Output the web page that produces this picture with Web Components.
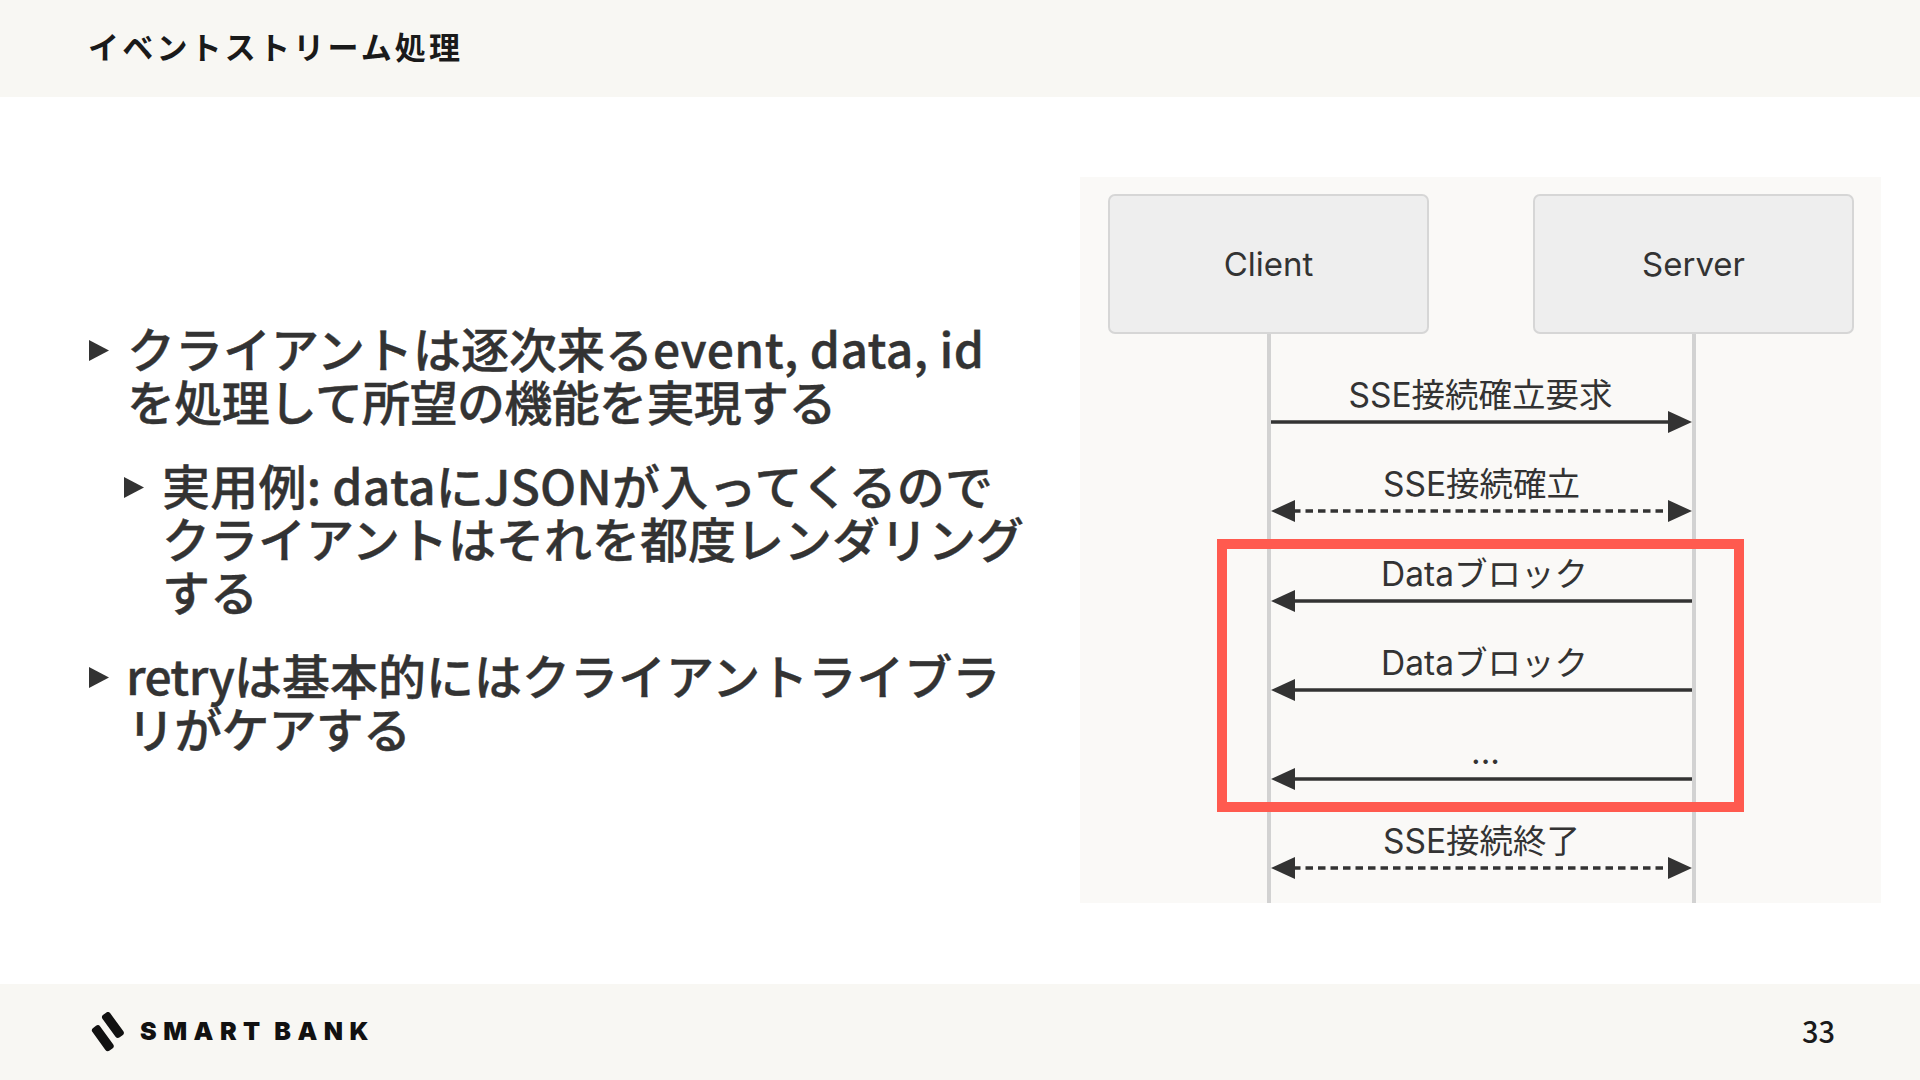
<!DOCTYPE html>
<html lang="ja"><head><meta charset="utf-8"><title>イベントストリーム処理</title>
<style>
html,body{margin:0;padding:0;background:#fff}
body{width:1920px;height:1080px;overflow:hidden;font-family:"Noto Sans CJK JP","Noto Sans",sans-serif}
</style></head><body>
<slide-page>
  <slide-header slot="header">イベントストリーム処理</slide-header>
  <bullet-list slot="left">
    <bullet-item>クライアントは逐次来る<span style="letter-spacing:.35px">event, data, id</span><br><span style="letter-spacing:-.65px">を処理して所望の機能を実現する</span></bullet-item>
    <bullet-item sub><span style="letter-spacing:.25px">実用例: dataにJSONが入ってくるので</span><br>クライアントはそれを都度レンダリング<br>する</bullet-item>
    <bullet-item><span style="letter-spacing:-.7px;margin-left:-1px">retry</span>は基本的にはクライアントライブラ<br><span style="letter-spacing:-.8px">リがケアする</span></bullet-item>
  </bullet-list>
  <seq-diagram slot="right">
    <seq-message dir="right" shift="-1">SSE接続確立要求</seq-message>
    <seq-message dir="both" dashed>SSE接続確立</seq-message>
    <seq-message dir="left" shift="3">Dataブロック</seq-message>
    <seq-message dir="left" shift="3">Dataブロック</seq-message>
    <seq-message dir="left" shift="4">...</seq-message>
    <seq-message dir="both" dashed>SSE接続終了</seq-message>
  </seq-diagram>
  <slide-footer slot="footer" page="33"></slide-footer>
</slide-page>
<script>
function def(name, css, html, init){
  customElements.define(name, class extends HTMLElement{
    constructor(){super();this.attachShadow({mode:'open'}).innerHTML='<style>'+css+'</style>'+html;}
    connectedCallback(){ if(init) init(this); }
  });
}
def('slide-page',`
  :host{display:grid;grid-template-rows:97px 1fr 96px;width:1920px;height:1080px}
  main{display:grid;grid-template-columns:1fr 801px;align-items:center;padding:0 39px 0 89px;min-height:0}
`,`<slot name="header"></slot><main><slot name="left"></slot><slot name="right"></slot></main><slot name="footer"></slot>`);
def('slide-header',`
  :host{display:flex;align-items:center;background:#f8f7f3;padding:0 0 6px 88px;box-sizing:border-box;
  font-size:31px;font-weight:700;letter-spacing:3.2px;color:#1a1a1a}
`,`<slot></slot>`);
def('bullet-list',`
  :host{display:flex;flex-direction:column;gap:31px;font-size:48px;line-height:53px;font-weight:500;color:#333;-webkit-text-stroke:.4px #333}
`,`<slot></slot>`);
def('bullet-item',`
  :host{display:flex;gap:18px;white-space:nowrap}
  :host([sub]){margin-left:35px}
  svg{flex:none;width:20px;height:21px;margin-top:16px}
  div{flex:1;margin:-3px 0 3px}
`,`<svg viewBox="0 0 20 21"><path d="M0 0L20 10.5L0 21Z" fill="#333"/></svg><div><slot></slot></div>`);
def('seq-diagram',`
  :host{display:block;position:relative;width:801px;height:726px;margin-bottom:1px;box-sizing:border-box;background:#faf9f7;padding:17px 27px 0 28px;
  font-family:Inter,"Noto Sans CJK JP",sans-serif;font-size:33px;color:#333;font-weight:400}
  .boxes{display:flex;justify-content:space-between}
  .box{width:321px;height:140px;box-sizing:border-box;border:2px solid #d6d6d6;border-radius:7px;background:#eee;display:flex;align-items:center;justify-content:center;font-size:33px}
  .life{position:absolute;top:157px;bottom:0;width:4px;background:#d2d2d2}
  .msgs{position:relative;padding:10px 0 0 163px;font-size:33.5px}
  .hl{position:absolute;left:137px;top:362px;width:527px;height:273px;box-sizing:border-box;border:10px solid #ff5a4f}
`,`<div class="life" style="left:187px"></div><div class="life" style="left:612px"></div>
  <div class="boxes"><div class="box">Client</div><div class="box">Server</div></div>
  <div class="msgs"><slot></slot></div><div class="hl"></div>`);
def('seq-message',`
  :host{display:block;height:89.2px;width:421px;position:relative}
  .t{position:absolute;left:0;right:0;bottom:16px;text-align:center;line-height:44px;white-space:nowrap}
  svg{position:absolute;left:0;bottom:0;width:421px;height:22px;display:block}
`,`<div class="t"><slot></slot></div><svg viewBox="0 0 421 22"></svg>`,(el)=>{
  const d=el.getAttribute('dir'), dashed=el.hasAttribute('dashed');
  const l=d==='left'||d==='both', r=d==='right'||d==='both';
  const s=el.getAttribute('shift'); if(s) el.shadowRoot.querySelector('.t').style.transform='translateX('+s+'px)';
  el.shadowRoot.querySelector('svg').innerHTML=
    `<line x1="${l?22:0}" y1="11" x2="${r?399:421}" y2="11" stroke="#333" stroke-width="3.4" ${dashed?'stroke-dasharray="7.5 5"':''}/>`+
    (l?'<path d="M0 11L24 0V22Z" fill="#333"/>':'')+
    (r?'<path d="M421 11L397 0V22Z" fill="#333"/>':'');
});
def('slide-footer',`
  :host{display:flex;align-items:center;justify-content:space-between;background:#f8f7f3;padding:0 85px 0 91px;color:#111}
  .logo{display:flex;align-items:center;gap:15px}
  svg{width:34px;height:40px;display:block}
  .w{font-family:Inter,"Noto Sans",sans-serif;font-weight:900;font-size:25px;letter-spacing:6.5px;line-height:1;word-spacing:-4px;margin-top:-1px}
  .n{font-size:29px;font-weight:500;font-family:"Noto Sans CJK JP",sans-serif;color:#1a1a1a;margin-top:-4px}
`,`<div class="logo"><svg viewBox="0 0 34 40"><g fill="#111"><rect x="-4.75" y="-14" width="9.5" height="28" rx="3" transform="translate(21.9 13) rotate(-36)"/><rect x="-4.75" y="-14" width="9.5" height="28" rx="3" transform="translate(11.8 26.2) rotate(-36)"/></g></svg><span class="w">SMART BANK</span></div><span class="n"></span>`,(el)=>{
  el.shadowRoot.querySelector('.n').textContent=el.getAttribute('page');
});
</script>
</body></html>
